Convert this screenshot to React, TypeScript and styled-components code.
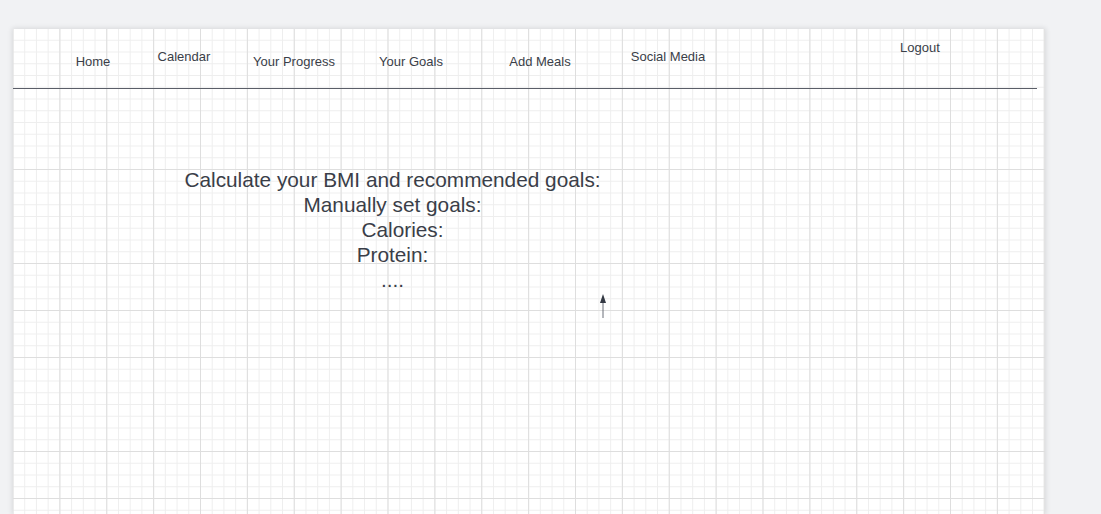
import React from "react";
import styled, { createGlobalStyle } from "styled-components";

const GlobalStyle = createGlobalStyle`
  html, body {
    margin: 0;
    padding: 0;
    background: #f1f2f4;
    overflow: hidden;
  }
  body {
    font-family: "Liberation Sans", Arial, sans-serif;
    color: #393d47;
  }
`;

const Page = styled.div`
  width: 1101px;
  height: 514px;
  padding: 29px 0 0 13px;
  box-sizing: border-box;
`;

const Canvas = styled.div`
  position: relative;
  width: 1032px;
  height: 485px;
  background-color: #ffffff;
  box-shadow: 0 0 5px 1px rgba(0, 0, 0, 0.1);
  background-image:
    linear-gradient(to right, #dedede 1px, transparent 1px),
    linear-gradient(to bottom, #dedede 1px, transparent 1px),
    linear-gradient(to right, #eeeeee 1px, transparent 1px),
    linear-gradient(to bottom, #eeeeee 1px, transparent 1px);
  background-size: 46.875px 100%, 100% 47px, 11.71875px 100%, 100% 11.75px;
  background-position: -0.5px -1px;
`;

const Nav = styled.nav`
  display: flex;
  align-items: flex-start;
  width: 1024px;
  height: 59px;
  border-bottom: 1px solid #5a5e68;
`;

const NavItem = styled.a<{ $gap: number; $top: number }>`
  display: flex;
  justify-content: center;
  flex: 0 0 90px;
  margin-left: ${(p) => p.$gap}px;
  padding-top: ${(p) => p.$top}px;
  font-size: 13px;
  line-height: 15px;
  white-space: nowrap;
  color: #3a3e48;
  text-decoration: none;
`;

const Content = styled.section`
  display: flex;
  flex-direction: column;
  align-items: center;
  width: 500px;
  margin-left: 129.5px;
  padding-top: 78px;
`;

const Line = styled.div<{ $indent?: number }>`
  font-size: 20.8px;
  line-height: 25px;
  white-space: nowrap;
  padding-left: ${(p) => p.$indent ?? 0}px;
  color: #3a3e48;
`;

const Arrow = styled.svg`
  position: absolute;
  left: 584px;
  top: 265px;
`;

const navItems = [
  { label: "Home", gap: 35, top: 25 },
  { label: "Calendar", gap: 1, top: 20 },
  { label: "Your Progress", gap: 20, top: 25 },
  { label: "Your Goals", gap: 27, top: 25 },
  { label: "Add Meals", gap: 39, top: 25 },
  { label: "Social Media", gap: 38, top: 20 },
  { label: "Logout", gap: 162, top: 10.5 },
];

export default function App() {
  return (
    <>
      <GlobalStyle />
      <Page>
        <Canvas>
          <Nav>
            {navItems.map((n) => (
              <NavItem key={n.label} $gap={n.gap} $top={n.top}>
                {n.label}
              </NavItem>
            ))}
          </Nav>
          <Content>
            <Line>Calculate your BMI and recommended goals:</Line>
            <Line>Manually set goals:</Line>
            <Line $indent={20}>Calories:</Line>
            <Line>Protein:</Line>
            <Line>....</Line>
          </Content>
          <Arrow width="12" height="25" viewBox="0 0 12 25">
            <line x1="6" y1="8" x2="6" y2="24" stroke="#6b6f78" strokeWidth="1" />
            <polygon points="6,0 3,9 9,9" fill="#353a45" />
          </Arrow>
        </Canvas>
      </Page>
    </>
  );
}
